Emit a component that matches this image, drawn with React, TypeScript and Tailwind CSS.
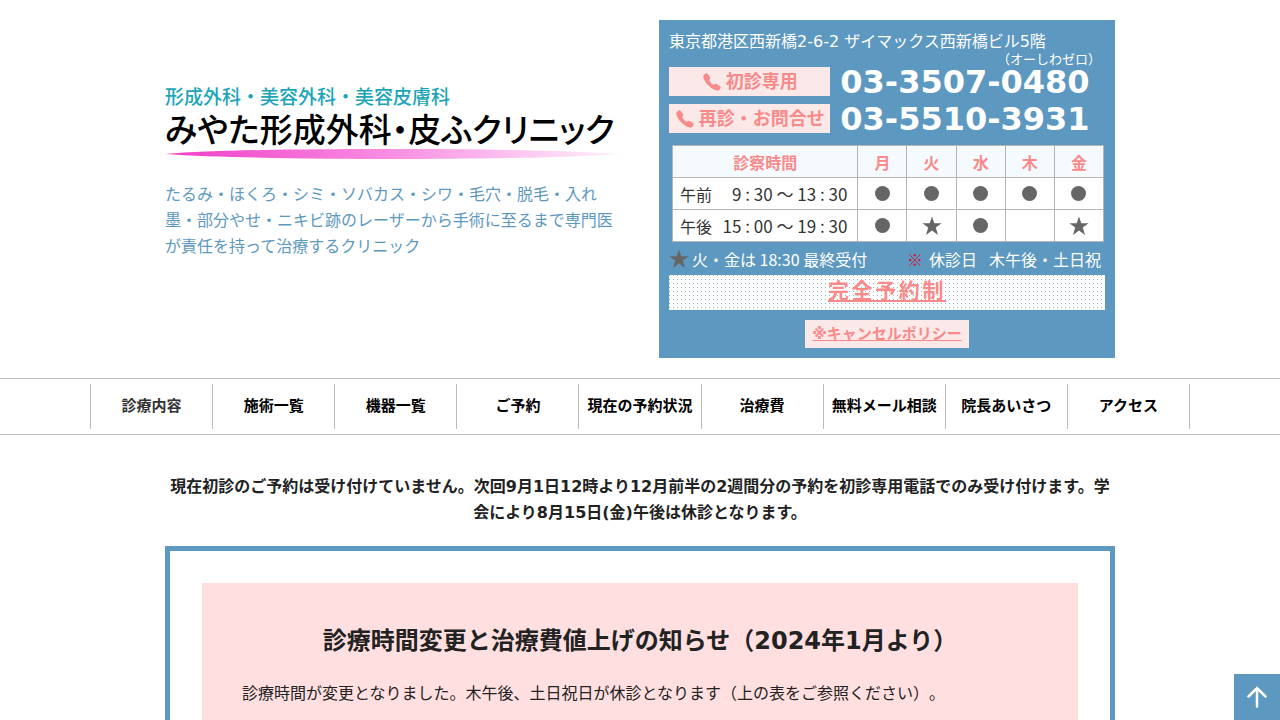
import { IoCall } from 'react-icons/io5';

const navItems = [
  '診療内容',
  '施術一覧',
  '機器一覧',
  'ご予約',
  '現在の予約状況',
  '治療費',
  '無料メール相談',
  '院長あいさつ',
  'アクセス',
];

const days = ['月', '火', '水', '木', '金'];

const hours = [
  { label: '午前', start: '9 : 30', end: '13 : 30', marks: ['dot', 'dot', 'dot', 'dot', 'dot'] },
  { label: '午後', start: '15 : 00', end: '19 : 30', marks: ['dot', 'star', 'dot', '', 'star'] },
];

const phones = [
  { label: '初診専用', number: '03-3507-0480', ruby: '（オーしわゼロ）' },
  { label: '再診・お問合せ', number: '03-5510-3931', ruby: '' },
];

const Star = () => (
  <svg viewBox="0 0 20 20" className="size-5 shrink-0 fill-[#666]" aria-hidden="true">
    <path d="M10 0.5 12.3 7.3H19.6L13.8 11.6 16 18.9 10 14.6 4 18.9 6.2 11.6 0.4 7.3H7.7Z" />
  </svg>
);

const Mark = ({ type }: { type: string }) => {
  if (type === 'dot') return <span className="mx-auto block size-[15px] rounded-full bg-[#666]" />;
  if (type === 'star') return <span className="flex justify-center"><Star /></span>;
  return null;
};

const Logo = () => (
  <a href="#" className="block font-['Noto_Sans_CJK_JP',sans-serif] whitespace-nowrap">
    <span className="block text-[19px] leading-6 font-medium text-[#1ca5b8]">
      形成外科・美容外科・美容皮膚科
    </span>
    <span className="block text-[33px] leading-10 font-medium text-black [font-feature-settings:'palt']">
      みやた形成外科・皮ふクリニック
    </span>
    <svg viewBox="0 0 456 12" className="block h-3 w-full" preserveAspectRatio="none" aria-hidden="true">
      <defs>
        <linearGradient id="swoosh">
          <stop offset="0" stopColor="#f03cc8" />
          <stop offset="0.5" stopColor="#f78fe2" />
          <stop offset="1" stopColor="#fff2fc" />
        </linearGradient>
      </defs>
      <path d="M0 6C60 1 180 1 240 1S400 2 456 6C400 10 300 11 230 11S60 10 0 6Z" fill="url(#swoosh)" />
    </svg>
  </a>
);

const HoursTable = () => (
  <table className="mx-[3px] mt-2 w-[calc(100%-4px)] table-fixed border-collapse border border-[#b4b4b4] bg-white font-['Noto_Sans_CJK_JP',sans-serif] text-base text-[#333]">
    <thead>
      <tr className="h-8 bg-[#f5faff] text-[#f98a8a]">
        <th className="w-[43%] border border-[#b4b4b4] p-0 leading-6">診察時間</th>
        {days.map((day) => (
          <th key={day} className="border border-[#b4b4b4] p-0 leading-6">{day}</th>
        ))}
      </tr>
    </thead>
    <tbody>
      {hours.map((row) => (
        <tr key={row.label} className="h-8">
          <th className="border border-[#b4b4b4] p-0 font-normal">
            <span className="flex justify-between pr-[10px] pl-[7px] leading-6">
              <span>{row.label}</span>
              <span className="text-[17px] whitespace-nowrap">{row.start} ～ {row.end}</span>
            </span>
          </th>
          {row.marks.map((mark, i) => (
            <td key={days[i]} className="border border-[#b4b4b4] p-0">
              <Mark type={mark} />
            </td>
          ))}
        </tr>
      ))}
    </tbody>
  </table>
);

const InfoPanel = () => (
  <div className="w-[48%] bg-[#5d98c0] p-[10px] text-white">
    <p className="mb-[9px] leading-6 whitespace-nowrap">東京都港区西新橋2-6-2 ザイマックス西新橋ビル5階</p>
    {phones.map((phone) => (
      <div key={phone.number} className="relative flex h-[37px] items-center gap-[10px]">
        <span className="flex h-[29px] w-[37%] items-center justify-center gap-1 bg-[#fbe9e9] text-lg leading-none font-bold whitespace-nowrap text-[#f98a8a]">
          <IoCall className="size-5" />
          {phone.label}
        </span>
        <a href={`tel:${phone.number}`} className="text-[32px] leading-none font-bold whitespace-nowrap">
          {phone.number}
        </a>
        {phone.ruby && (
          <span className="absolute -top-[9px] right-1 text-[13px] leading-3 [text-spacing-trim:space-all]">{phone.ruby}</span>
        )}
      </div>
    ))}
    <HoursTable />
    <div className="flex h-[33px] items-center justify-between pr-1 font-['Noto_Sans_CJK_JP',sans-serif] whitespace-nowrap">
      <span className="flex items-center gap-[3px]">
        <Star />
        火・金は 18:30 最終受付
      </span>
      <span className="flex gap-3">
        <span className="flex gap-[6px]">
          <span className="font-bold text-[#c8203c]">※</span>
          休診日
        </span>
        <span>木午後・土日祝</span>
      </span>
    </div>
    <p className="h-[35px] bg-white bg-[conic-gradient(at_1px_1px,transparent_75%,#93b4c8_0)] bg-[size:4px_4px] text-center text-[21px] leading-8 font-bold tracking-[0.125em] text-[#f98a8a]">
      <a href="#" className="underline">完全予約制</a>
    </p>
    <p className="mt-[10px] flex justify-center">
      <a href="#" className="bg-[#fbe9e9] px-[7px] text-[15px] leading-7 font-bold text-[#f98a8a] underline">
        ※キャンセルポリシー
      </a>
    </p>
  </div>
);

export default function App() {
  return (
    <div className="bg-white font-['DejaVu_Sans','Noto_Sans_CJK_JP',sans-serif] text-base text-[#222]" lang="ja">
      <header className="mx-auto flex max-w-[950px] justify-between py-5">
        <div className="w-[48%] pt-16">
          <Logo />
          <p className="mt-[22px] leading-[26px] text-[#5d98c0]">
            たるみ・ほくろ・シミ・ソバカス・シワ・毛穴・脱毛・入れ墨・部分やせ・ニキビ跡のレーザーから手術に至るまで専門医が責任を持って治療するクリニック
          </p>
        </div>
        <InfoPanel />
      </header>

      <nav className="border-y border-[#bbb] py-[5px]">
        <ul className="mx-auto flex max-w-[1100px] border-r border-[#bbb]">
          {navItems.map((item, i) => (
            <li key={item} className="flex-1 border-l border-[#bbb]">
              <a
                href="#"
                className={`block text-center text-[15px] leading-[45px] font-bold whitespace-nowrap ${i === 0 ? 'text-[#333]' : 'text-black'}`}
              >
                {item}
              </a>
            </li>
          ))}
        </ul>
      </nav>

      <main className="mx-auto max-w-[950px] pt-[39px]">
        <p className="text-center leading-[26px] font-bold">
          現在初診のご予約は受け付けていません。次回9月1日12時より12月前半の2週間分の予約を初診専用電話でのみ受け付けます。学会により8月15日(金)午後は休診となります。
        </p>
        <section className="mt-5 border-[5px] border-[#5d98c0] p-8">
          <div className="bg-[#ffdfdf] p-10">
            <h2 className="text-center text-2xl leading-9 font-bold">診療時間変更と治療費値上げの知らせ（2024年1月より）</h2>
            <p className="mt-[22px] leading-[26px] [text-spacing-trim:space-all]">
              診療時間が変更となりました。木午後、土日祝日が休診となります（上の表をご参照ください）。
            </p>
          </div>
        </section>
      </main>

      <button
        type="button"
        aria-label="ページの先頭へ"
        className="fixed right-0 bottom-0 flex size-[46px] items-center justify-center bg-[#5d98c0] text-white"
      >
        <svg viewBox="0 0 20 22" className="h-[22px] w-5" fill="none" stroke="currentColor" strokeWidth="2.5" strokeLinecap="round" aria-hidden="true">
          <path d="M10 20.500V2M1.500 10.500 10 2l8.500 8.500" />
        </svg>
      </button>
    </div>
  );
}
